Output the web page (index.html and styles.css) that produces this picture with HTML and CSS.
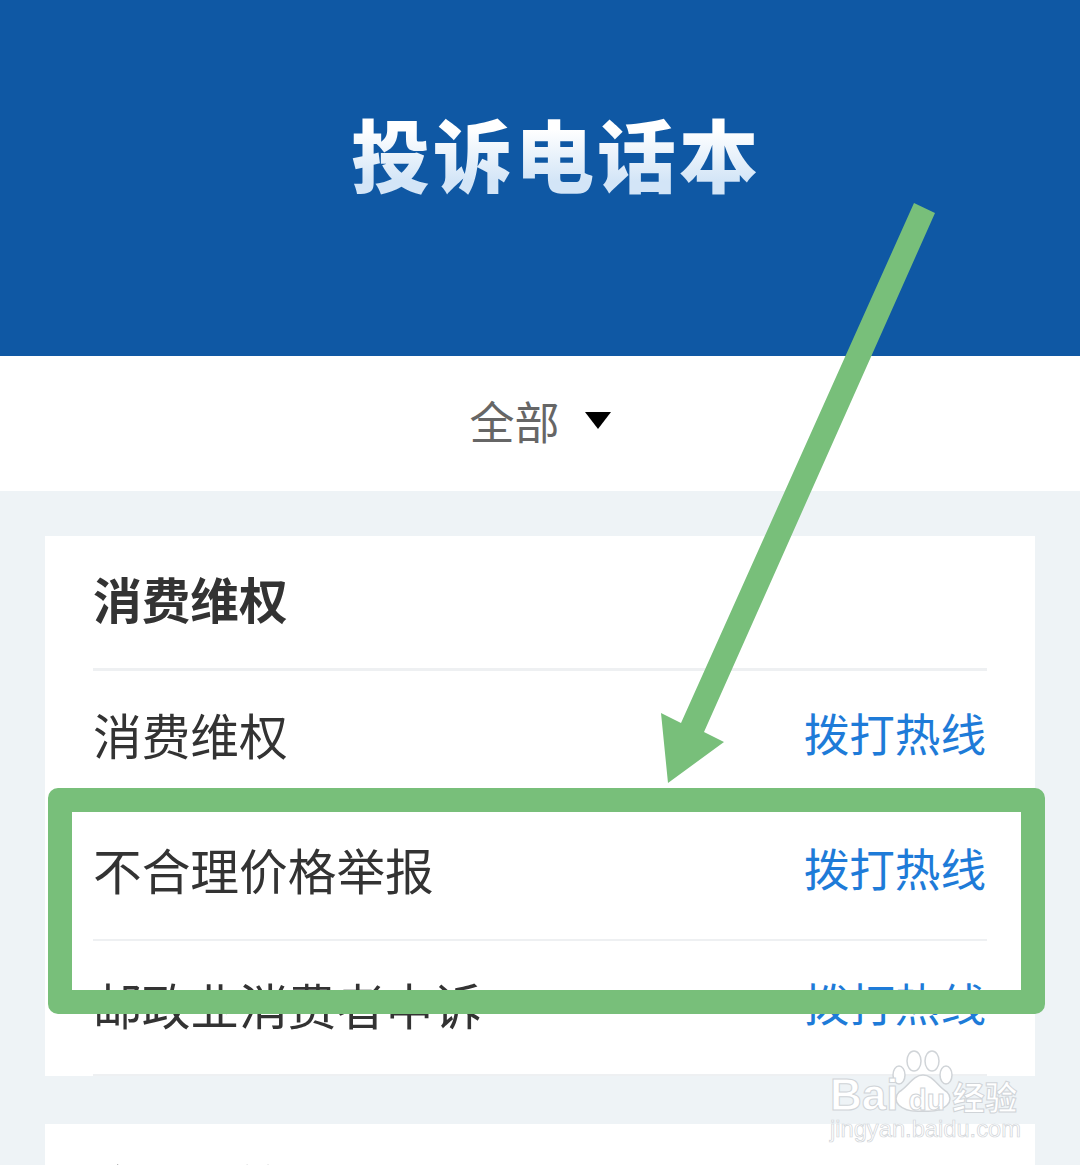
FILE: index.html
```html
<!DOCTYPE html>
<html lang="zh-CN">
<head>
  <meta charset="UTF-8">
  <title>投诉电话本</title>
  <link rel="stylesheet" href="styles.css">
</head>
<body>
  <div class="page">
    <header class="banner"><h1>投诉电话本</h1></header>
    <div class="filter">
      <span class="filter-label">全部</span>
      <span class="caret"></span>
    </div>
    <main class="content">
      <section class="card">
        <h2 class="card-title">消费维权</h2>
        <div class="row"><span class="row-name">消费维权</span><a class="row-link">拨打热线</a></div>
        <div class="row"><span class="row-name">不合理价格举报</span><a class="row-link">拨打热线</a></div>
        <div class="row"><span class="row-name">邮政业消费者申诉</span><a class="row-link">拨打热线</a></div>
      </section>
      <section class="card">
        <h2 class="card-title">市场监管</h2>
      </section>
    </main>
    <svg class="arrow" width="1080" height="1165" viewBox="0 0 1080 1165">
      <path d="M914 203 L935 213 L704 732 L724 742 L668 783 L661 713 L681 723 Z" fill="#78bf7a"/>
    </svg>
    <div class="highlight"></div>
    <div class="watermark">
      <svg class="paw" width="70" height="66" viewBox="0 0 70 66">
        <g fill="#fff" stroke="#d0d4d8" stroke-width="1.5">
          <ellipse cx="8" cy="25" rx="6" ry="9"/>
          <ellipse cx="23" cy="11" rx="7" ry="10"/>
          <ellipse cx="41" cy="11" rx="7" ry="10"/>
          <ellipse cx="55" cy="25" rx="6" ry="9"/>
          <path d="M32 25 C22 25 18 36 8 42 C0 50 8 63 32 61 C56 63 64 50 56 42 C46 36 42 25 32 25 Z"/>
        </g>
      </svg>
      <div class="wm-main"><span class="wm-latin">Bai</span><span class="wm-du">du</span><span class="wm-cn">经验</span></div>
      <div class="wm-url">jingyan.baidu.com</div>
    </div>
  </div>
</body>
</html>
```

FILE: styles.css
```css
* {
  box-sizing: border-box;
}
body {
  margin: 0;
  font-family: "Noto Sans CJK SC", "Noto Sans", sans-serif;
}
.page {
  position: relative;
  width: 1080px;
  height: 1165px;
  overflow: hidden;
  background-color: #eef3f6;
}
.banner {
  height: 356px;
  background-color: #0f58a4;
  padding-top: 106px;
  padding-left: 32px;
  text-align: center;
}
.banner h1 {
  margin: 0;
  font-size: 79px;
  line-height: 94px;
  font-weight: 900;
  letter-spacing: 3px;
  color: transparent;
  background-image: linear-gradient(#ffffff 25%, #d3e5f7 80%);
  -webkit-background-clip: text;
  background-clip: text;
}
.filter {
  height: 135px;
  background-color: #fff;
  display: flex;
  align-items: center;
  justify-content: center;
  gap: 25px;
  padding-bottom: 6px;
}
.filter-label {
  font-size: 45px;
  color: #666;
}
.caret {
  width: 0;
  height: 0;
  border-left: 13px solid transparent;
  border-right: 13px solid transparent;
  border-top: 17px solid #000;
}
.content {
  padding: 45px 45px 0;
}
.card {
  background-color: #fff;
  padding: 0 48px;
  margin-bottom: 48px;
}
.card-title {
  margin: 0;
  height: 135px;
  display: flex;
  align-items: center;
  padding-bottom: 9px;
  font-size: 48.7px;
  font-weight: 700;
  color: #333;
  border-bottom: 3px solid #eef0f2;
}
.row {
  height: 135px;
  display: flex;
  align-items: center;
  justify-content: space-between;
  padding-bottom: 8px;
  border-bottom: 2px solid #eef0f2;
}
.row-name {
  font-size: 48.7px;
  color: #333;
}
.row-link {
  font-size: 45.6px;
  margin-right: 1px;
  margin-bottom: 3px;
  color: #1e7bd8;
}
.arrow {
  position: absolute;
  left: 0;
  top: 0;
}
.highlight {
  position: absolute;
  left: 48px;
  top: 788px;
  width: 997px;
  height: 226px;
  border: 24px solid #78bf7a;
  border-radius: 10px;
}
.watermark {
  position: absolute;
  left: 830px;
  top: 1050px;
  width: 200px;
  height: 100px;
  color: #fff;
}
.paw {
  position: absolute;
  left: 61px;
  top: 0;
}
.wm-main {
  position: absolute;
  left: 0;
  top: 20px;
  font-family: "Liberation Sans", sans-serif;
  font-size: 44px;
  font-weight: 700;
  white-space: nowrap;
  -webkit-text-stroke: 1px #d0d4d8;
}
.wm-du {
  font-size: 30px;
  margin-left: 10px;
}
.wm-cn {
  font-family: "Noto Sans CJK SC", sans-serif;
  font-size: 32.5px;
  margin-left: 7px;
}
.wm-url {
  position: absolute;
  left: 0;
  top: 66px;
  font-family: "Liberation Sans", sans-serif;
  font-size: 23.7px;
  white-space: nowrap;
  -webkit-text-stroke: 0.7px #d0d4d8;
}
```
